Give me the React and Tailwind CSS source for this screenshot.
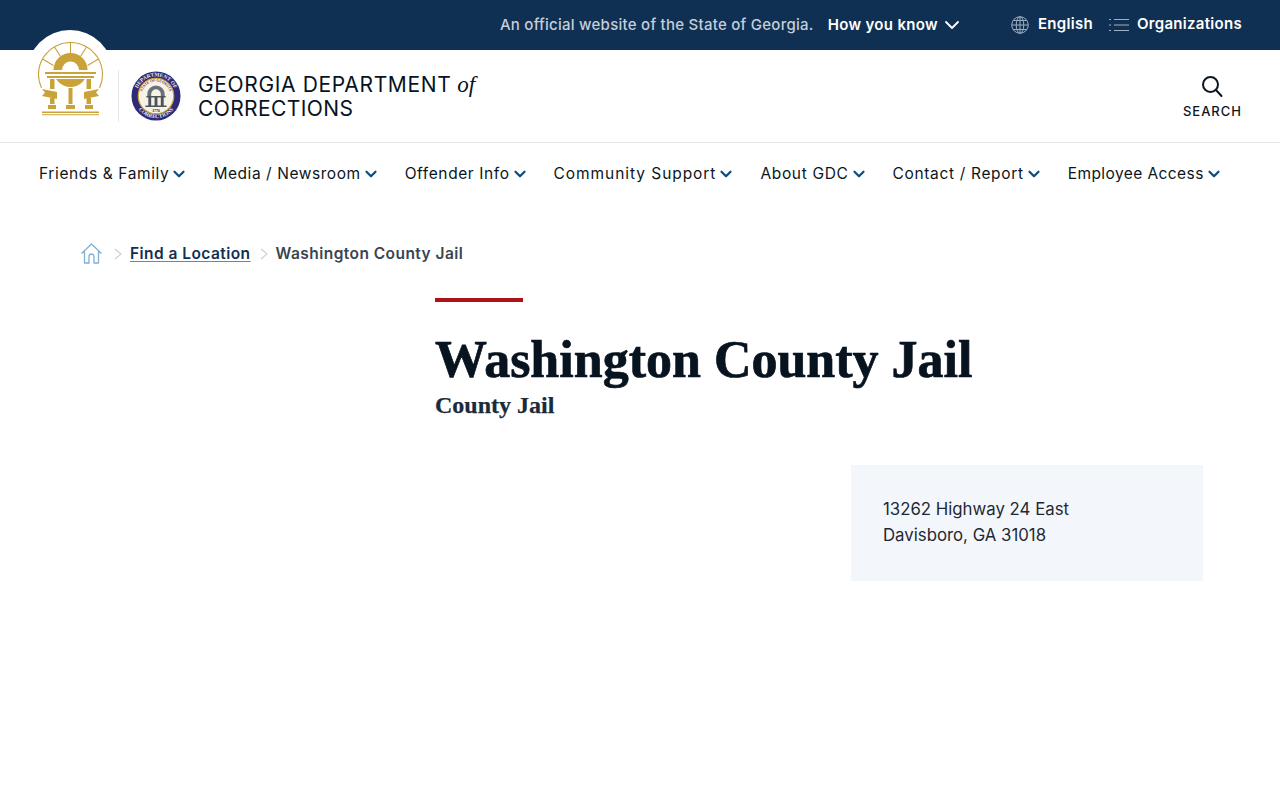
import React from 'react'
import { ChevronDown } from 'lucide-react'

const navItems = [
    { label: 'Friends & Family', spacing: 'tracking-[0.62px]' },
    { label: 'Media / Newsroom', spacing: 'tracking-[0.56px]' },
    { label: 'Offender Info', spacing: 'tracking-[0.6px]' },
    { label: 'Community Support', spacing: 'tracking-[0.94px]' },
    { label: 'About GDC', spacing: 'tracking-[0.67px]' },
    { label: 'Contact / Report', spacing: 'tracking-[0.66px]' },
    { label: 'Employee Access', spacing: 'tracking-[0.42px]' },
]

const StateLogo = () => (
    <svg className="w-[66px] h-[74px]" viewBox="0 0 66 74" fill="none">
        <path d="M3.5 46A32 32 0 1 1 61.5 46" stroke="#c9a23a" strokeWidth="1.1" />
        <path d="M32.5 1V11M16.5 5l6 9.5M48.5 5l-6 9.5M4.5 17l11 6.5M60.5 17l-11 6.5" stroke="#c9a23a" strokeWidth="1.1" />
        <circle cx="32.5" cy="28" r="12.7" stroke="#c9a23a" strokeWidth="8.6" />
        <path d="M7 28H58V37H7Z" fill="white" />
        <path d="M7 30H58V32H7ZM9 34H56V36H9Z" fill="#c9a23a" />
        <path d="M12 37H16.5V47H12ZM12 56H16.5V62H12ZM30.5 46H34.5V62H30.5ZM48.5 37H53V47H48.5ZM48.5 56H53V62H48.5Z" fill="#c9a23a" />
        <path d="M4 47L19 50V57L4 54L7 50.5Z M61 47L46 50V57L61 54L58 50.5Z" fill="#c9a23a" />
        <path d="M10 63H18V67H10ZM28 63H37V67H28ZM47 63H55V67H47Z" fill="#c9a23a" />
        <path d="M4 69.5H61V71H4ZM4 72.3H61V73.3H4Z" fill="#c9a23a" />
    </svg>
)

const Seal = () => (
    <svg className="w-[50px] h-[50px]" viewBox="0 0 52 52" fill="none">
        <defs>
            <path id="sealTop" d="M5.5 26A20.5 20.5 0 0 1 46.5 26" />
            <path id="sealBottom" d="M3 26A23 23 0 0 0 49 26" />
            <path id="sealInner" d="M11 26A15 15 0 0 1 41 26" />
        </defs>
        <circle cx="26" cy="26" r="25.5" fill="#2f2a78" />
        <text fontSize="5.6" fontWeight="700" fill="#f4f1e4" fontFamily="Liberation Serif, serif" textAnchor="middle">
            <textPath href="#sealTop" startOffset="50%">DEPARTMENT OF</textPath>
        </text>
        <text fontSize="5.6" fontWeight="700" fill="#f4f1e4" fontFamily="Liberation Serif, serif" textAnchor="middle">
            <textPath href="#sealBottom" startOffset="50%">CORRECTIONS</textPath>
        </text>
        <circle cx="26" cy="26" r="18.5" fill="#f5f2e6" stroke="#c9a23a" strokeWidth="1.2" />
        <text fontSize="3.8" fontWeight="700" fill="#7a2b2b" fontFamily="Liberation Serif, serif" textAnchor="middle">
            <textPath href="#sealInner" startOffset="50%">STATE OF GEORGIA</textPath>
        </text>
        <path d="M17 24A9 9 0 0 1 35 24V26H31V24A5 5 0 0 0 21 24V26H17Z" fill="#6b7078" />
        <path d="M16 26H36V27.5H16ZM18 27.5H21V36H18ZM24.5 27.5H27.5V36H24.5ZM31 27.5H34V36H31ZM15 36H37V37.5H15Z" fill="#4f545c" />
        <text x="26" y="42.5" fontSize="4" fontWeight="700" fill="#222" fontFamily="Liberation Serif, serif" textAnchor="middle">1776</text>
    </svg>
)

const Caret = () => (
    <svg className="w-[8px] h-[12px] text-[#c3d0dc]" viewBox="0 0 8 12" fill="none" stroke="currentColor" strokeWidth="1.1">
        <path d="M1 1L7 6L1 11" />
    </svg>
)

const App = () => {
    return (
        <div className="relative min-h-[800px] bg-white font-['Inter',sans-serif] text-[#0b1620]">
            <div className="h-[50px] bg-[#103053] flex items-center justify-end pr-[38px] text-white text-[15px] font-medium">
                <span className="text-[#c5ced8] tracking-[0.26px]">An official website of the State of Georgia.</span>
                <span className="ml-[14px] font-semibold tracking-[0.33px]">How you know</span>
                <ChevronDown className="ml-[2px] w-[24px] h-[24px] text-white" strokeWidth={1.8} />
                <svg className="ml-[47px] w-[18px] h-[18px] text-[#9fb0c2]" viewBox="0 0 24 24" fill="none" stroke="currentColor" strokeWidth="1.3">
                    <circle cx="12" cy="12" r="11" />
                    <ellipse cx="12" cy="12" rx="5" ry="11" />
                    <path d="M12 1V23M1 12H23M3 6H21M3 18H21" />
                </svg>
                <span className="ml-[9px] font-semibold tracking-[0.3px] -mt-[2px]">English</span>
                <svg className="ml-[16px] w-[20px] h-[14px] text-[#9fb0c2]" viewBox="0 0 20 14" fill="none" stroke="currentColor" strokeWidth="1">
                    <path d="M5 1.5H20M5 7H20M5 12.5H20M0 1.5H2M0 7H2M0 12.5H2" />
                </svg>
                <span className="ml-[8px] font-semibold tracking-[0.3px] -mt-[2px]">Organizations</span>
            </div>

            <div className="absolute left-[27px] top-[30px] w-[86px] h-[86px] rounded-full bg-white pl-[11px] pt-[12px]">
                <StateLogo />
            </div>

            <header className="h-[93px] border-b border-[#e5e7eb] flex items-center pl-[118px] pr-[38px]">
                <div className="relative w-px h-[52px] bg-[#e8e8e8] mr-[12px]" />
                <Seal />
                <div className="ml-[17px] mt-[2px] text-[21px] leading-[24px] text-[#07131f]">
                    <span className="tracking-[0.65px]">GEORGIA DEPARTMENT</span> <span className="font-['Liberation_Serif',serif] italic text-[23px]">of</span>
                    <br />
                    <span className="tracking-[0.4px]">CORRECTIONS</span>
                </div>
                <div className="ml-auto flex flex-col items-center">
                    <svg className="w-[24px] h-[24px] text-[#0b1620]" viewBox="0 0 24 24" fill="none" stroke="currentColor" strokeWidth="2" strokeLinecap="round">
                        <circle cx="10.5" cy="10.5" r="7.5" />
                        <path d="M16 16L21.5 22" />
                    </svg>
                    <span className="mt-[5px] text-[13px] leading-[16px] tracking-[1px] font-medium">SEARCH</span>
                </div>
            </header>

            <nav className="flex items-center pl-[39px] h-[62px] text-[15.5px] text-[#0b1620]">
                {navItems.map((item) => (
                    <div key={item.label} className="flex items-center mr-[25px]">
                        <span className={item.spacing}>{item.label}</span>
                        <ChevronDown className="ml-[1px] w-[18px] h-[18px] text-[#0f4c81]" strokeWidth={3} />
                    </div>
                ))}
            </nav>

            <div className="flex items-center pl-[81px] mt-[33px] h-[32px] text-[15.5px] font-semibold tracking-[0.45px]">
                <svg className="mb-[2px] mr-[12px] w-[21px] h-[21px] text-[#7fb0d8]" viewBox="0 0 21 21" fill="none" stroke="currentColor" strokeWidth="1.3" strokeLinejoin="round">
                    <path d="M0.5 10.5L10.5 1L20.5 10.5M3.5 8V20H8V13.5A2.5 2.5 0 0 1 13 13.5V20H17.5V8" />
                </svg>
                <Caret />
                <a className="ml-[8px] mr-[9px] text-[#103053] underline decoration-[#4d8fc4] underline-offset-2">Find a Location</a>
                <Caret />
                <span className="ml-[8px] text-[#3a4450]">Washington County Jail</span>
            </div>

            <main className="pl-[435px] pr-[77px] mt-[28px]">
                <div className="w-[88px] h-[4px] bg-[#ac1218]" />
                <h1 className="mt-[28px] text-[52px] leading-[60px] font-bold font-['Liberation_Serif',serif] text-[#07131f] [-webkit-text-stroke:0.7px_#07131f]">Washington County Jail</h1>
                <h2 className="text-[24px] leading-[30px] font-bold font-['Liberation_Serif',serif] text-[#1b2b3a] [-webkit-text-stroke:0.25px_#1b2b3a]">County Jail</h2>
                <div className="mt-[45px] ml-auto w-[352px] h-[116px] bg-[#f3f7fb] px-[32px] pt-[31px] text-[16.8px] leading-[26px] text-[#1f2933]">
                    13262 Highway 24 East
                    <br />
                    Davisboro, GA 31018
                </div>
            </main>
        </div>
    )
}

export default App
